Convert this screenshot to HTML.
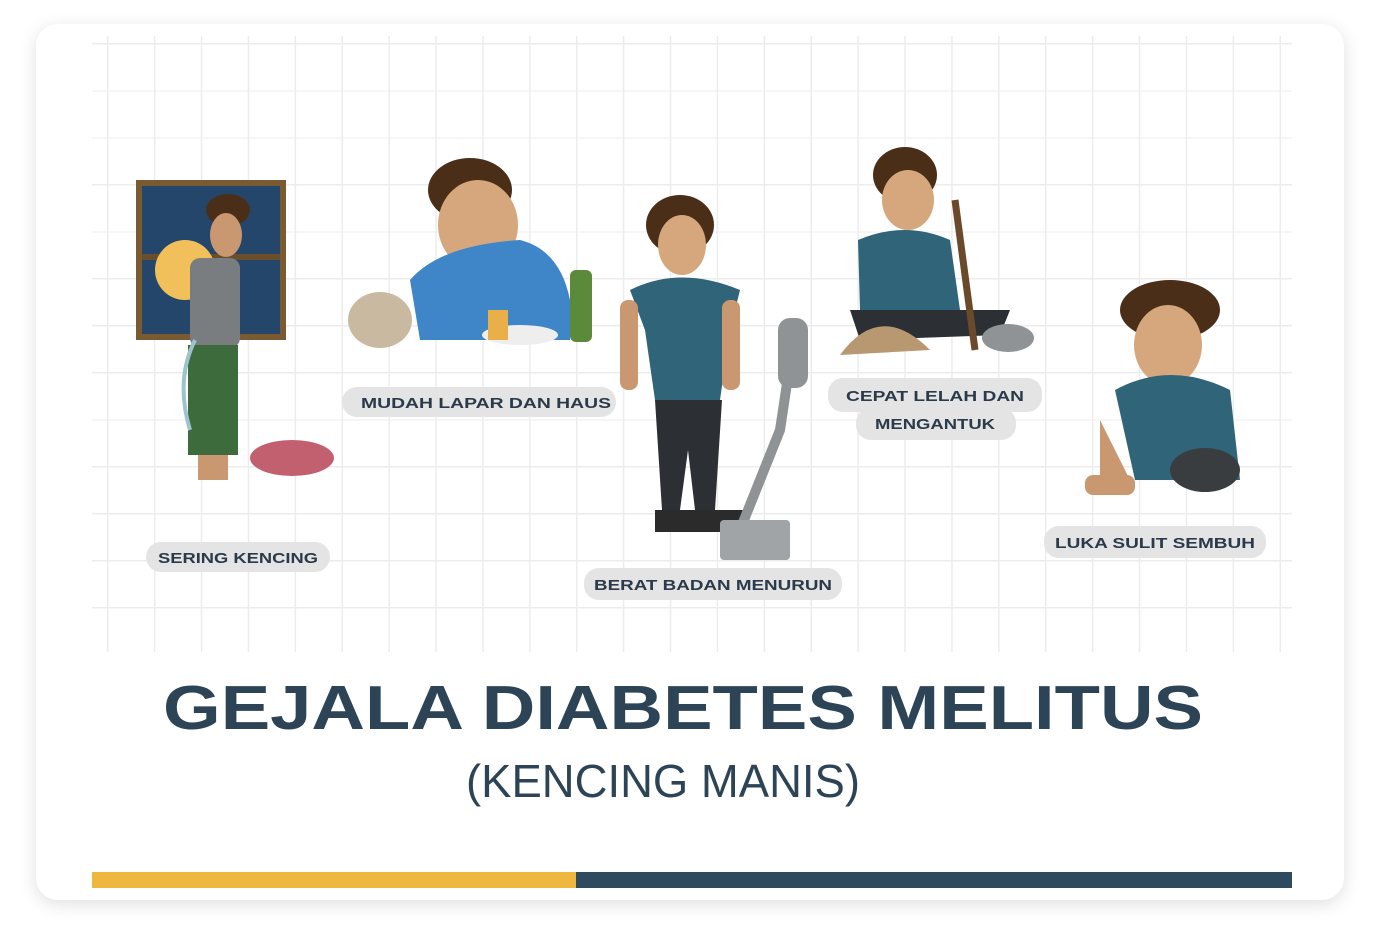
<!DOCTYPE html>
<html><head><style>
html,body{margin:0;padding:0;background:#fff;width:1380px;height:948px;overflow:hidden}
.card{position:absolute;left:36px;top:24px;width:1308px;height:876px;background:#fff;border-radius:22px;box-shadow:0 4px 18px rgba(0,0,0,0.13)}
svg{position:absolute;left:0;top:0}
</style></head><body>
<div class="card"></div>
<svg width="1380" height="948" viewBox="0 0 1380 948" font-family="Liberation Sans, sans-serif">
<defs>
<pattern id="g" x="107" y="43" width="46.9" height="47" patternUnits="userSpaceOnUse">
<rect x="-1.5" y="0" width="3" height="47" fill="#ececec"/><rect x="0" y="-1.5" width="46.9" height="3" fill="#ececec"/>
</pattern>
</defs>
<rect x="92" y="36" width="1200" height="616" fill="url(#g)"/>
<!-- figure 1: window + man -->
<rect x="136" y="180" width="150" height="160" fill="#7a5a30"/>
<rect x="142" y="186" width="138" height="148" fill="#24466a"/>
<rect x="142" y="254" width="138" height="6" fill="#6a4e2c"/>
<circle cx="185" cy="270" r="30" fill="#f1c05a"/>
<ellipse cx="228" cy="210" rx="22" ry="16" fill="#4a2e18"/>
<ellipse cx="226" cy="235" rx="16" ry="22" fill="#c99870"/>
<rect x="190" y="258" width="50" height="90" rx="10" fill="#7a7d80"/>
<rect x="188" y="345" width="50" height="110" fill="#3d6b3c"/>
<rect x="198" y="455" width="30" height="25" fill="#c99870"/>
<ellipse cx="292" cy="458" rx="42" ry="18" fill="#c2606f"/>
<path d="M195 340 Q175 380 190 430" stroke="#9cc4cc" stroke-width="4" fill="none"/>
<!-- figure 2 -->
<ellipse cx="380" cy="320" rx="32" ry="28" fill="#c9b9a0"/>
<ellipse cx="470" cy="190" rx="42" ry="32" fill="#4a2e18"/>
<ellipse cx="478" cy="225" rx="40" ry="45" fill="#d6a77c"/>
<path d="M410 280 Q440 245 520 240 Q560 250 570 300 L570 340 L420 340 Z" fill="#3f86c8"/>
<rect x="570" y="270" width="22" height="72" rx="6" fill="#5b8a3a"/>
<ellipse cx="520" cy="335" rx="38" ry="10" fill="#eee"/>
<rect x="488" y="310" width="20" height="30" fill="#e9b04a"/>
<!-- figure 3 -->
<ellipse cx="680" cy="225" rx="34" ry="30" fill="#4a2e18"/>
<ellipse cx="682" cy="245" rx="24" ry="30" fill="#d6a77c"/>
<path d="M630 290 Q680 265 740 290 L730 330 L720 400 L655 400 L645 330 Z" fill="#2f6479"/>
<rect x="620" y="300" width="18" height="90" rx="8" fill="#c99870"/>
<rect x="722" y="300" width="18" height="90" rx="8" fill="#c99870"/>
<path d="M655 400 L722 400 L715 510 L695 510 L688 450 L680 510 L662 510 Z" fill="#2c2f33"/>
<rect x="655" y="510" width="90" height="22" fill="#2b2b2b"/>
<path d="M740 530 L780 430 L795 330" stroke="#909396" stroke-width="10" fill="none"/>
<rect x="778" y="318" width="30" height="70" rx="12" fill="#8f9396"/>
<rect x="720" y="520" width="70" height="40" rx="4" fill="#a0a4a6"/>
<!-- figure 4 -->
<ellipse cx="905" cy="175" rx="32" ry="28" fill="#4a2e18"/>
<ellipse cx="908" cy="200" rx="26" ry="30" fill="#d6a77c"/>
<path d="M858 240 Q905 220 950 240 L960 310 L860 310 Z" fill="#2f6479"/>
<path d="M850 310 L1010 310 L1000 335 L860 340 Z" fill="#2c2f33"/>
<path d="M840 355 Q880 300 930 350 Z" fill="#b89870"/>
<path d="M955 200 L975 350" stroke="#6a4a2a" stroke-width="7"/>
<ellipse cx="1008" cy="338" rx="26" ry="14" fill="#8f9396"/>
<!-- figure 5 -->
<ellipse cx="1170" cy="310" rx="50" ry="30" fill="#4a2e18"/>
<ellipse cx="1168" cy="345" rx="34" ry="40" fill="#d6a77c"/>
<path d="M1115 390 Q1170 360 1230 390 L1240 480 L1135 480 Z" fill="#2f6479"/>
<path d="M1100 420 L1130 480 L1100 495 Z" fill="#c99870"/>
<ellipse cx="1205" cy="470" rx="35" ry="22" fill="#3a3d40"/>
<rect x="1085" y="475" width="50" height="20" rx="8" fill="#c99870"/>
<!-- labels -->
<g font-weight="bold" font-size="15" fill="#2b3a4a">
<rect x="146" y="542" width="184" height="30" rx="15" fill="#e4e4e4"/>
<text x="238" y="563" text-anchor="middle" textLength="160" lengthAdjust="spacingAndGlyphs">SERING KENCING</text>
<rect x="342" y="387" width="274" height="30" rx="15" fill="#e4e4e4"/>
<text x="486" y="408" text-anchor="middle" textLength="250" lengthAdjust="spacingAndGlyphs">MUDAH LAPAR DAN HAUS</text>
<rect x="584" y="568" width="258" height="32" rx="15" fill="#e4e4e4"/>
<text x="713" y="590" text-anchor="middle" textLength="238" lengthAdjust="spacingAndGlyphs">BERAT BADAN MENURUN</text>
<rect x="828" y="378" width="214" height="34" rx="15" fill="#e4e4e4"/>
<rect x="856" y="408" width="160" height="32" rx="15" fill="#e4e4e4"/>
<text x="935" y="401" text-anchor="middle" textLength="178" lengthAdjust="spacingAndGlyphs">CEPAT LELAH DAN</text>
<text x="935" y="429" text-anchor="middle" textLength="120" lengthAdjust="spacingAndGlyphs">MENGANTUK</text>
<rect x="1044" y="526" width="222" height="32" rx="15" fill="#e4e4e4"/>
<text x="1155" y="548" text-anchor="middle" textLength="200" lengthAdjust="spacingAndGlyphs">LUKA SULIT SEMBUH</text>
</g>
<text x="163" y="729" font-weight="bold" font-size="62" fill="#2d4456" textLength="1040" lengthAdjust="spacingAndGlyphs">GEJALA DIABETES MELITUS</text>
<text x="466" y="797" font-size="46" fill="#2d4456" textLength="394" lengthAdjust="spacingAndGlyphs">(KENCING MANIS)</text>
<rect x="92" y="872" width="484" height="16" fill="#efb73e"/>
<rect x="576" y="872" width="716" height="16" fill="#2d4a5e"/>
</svg>
</body></html>
